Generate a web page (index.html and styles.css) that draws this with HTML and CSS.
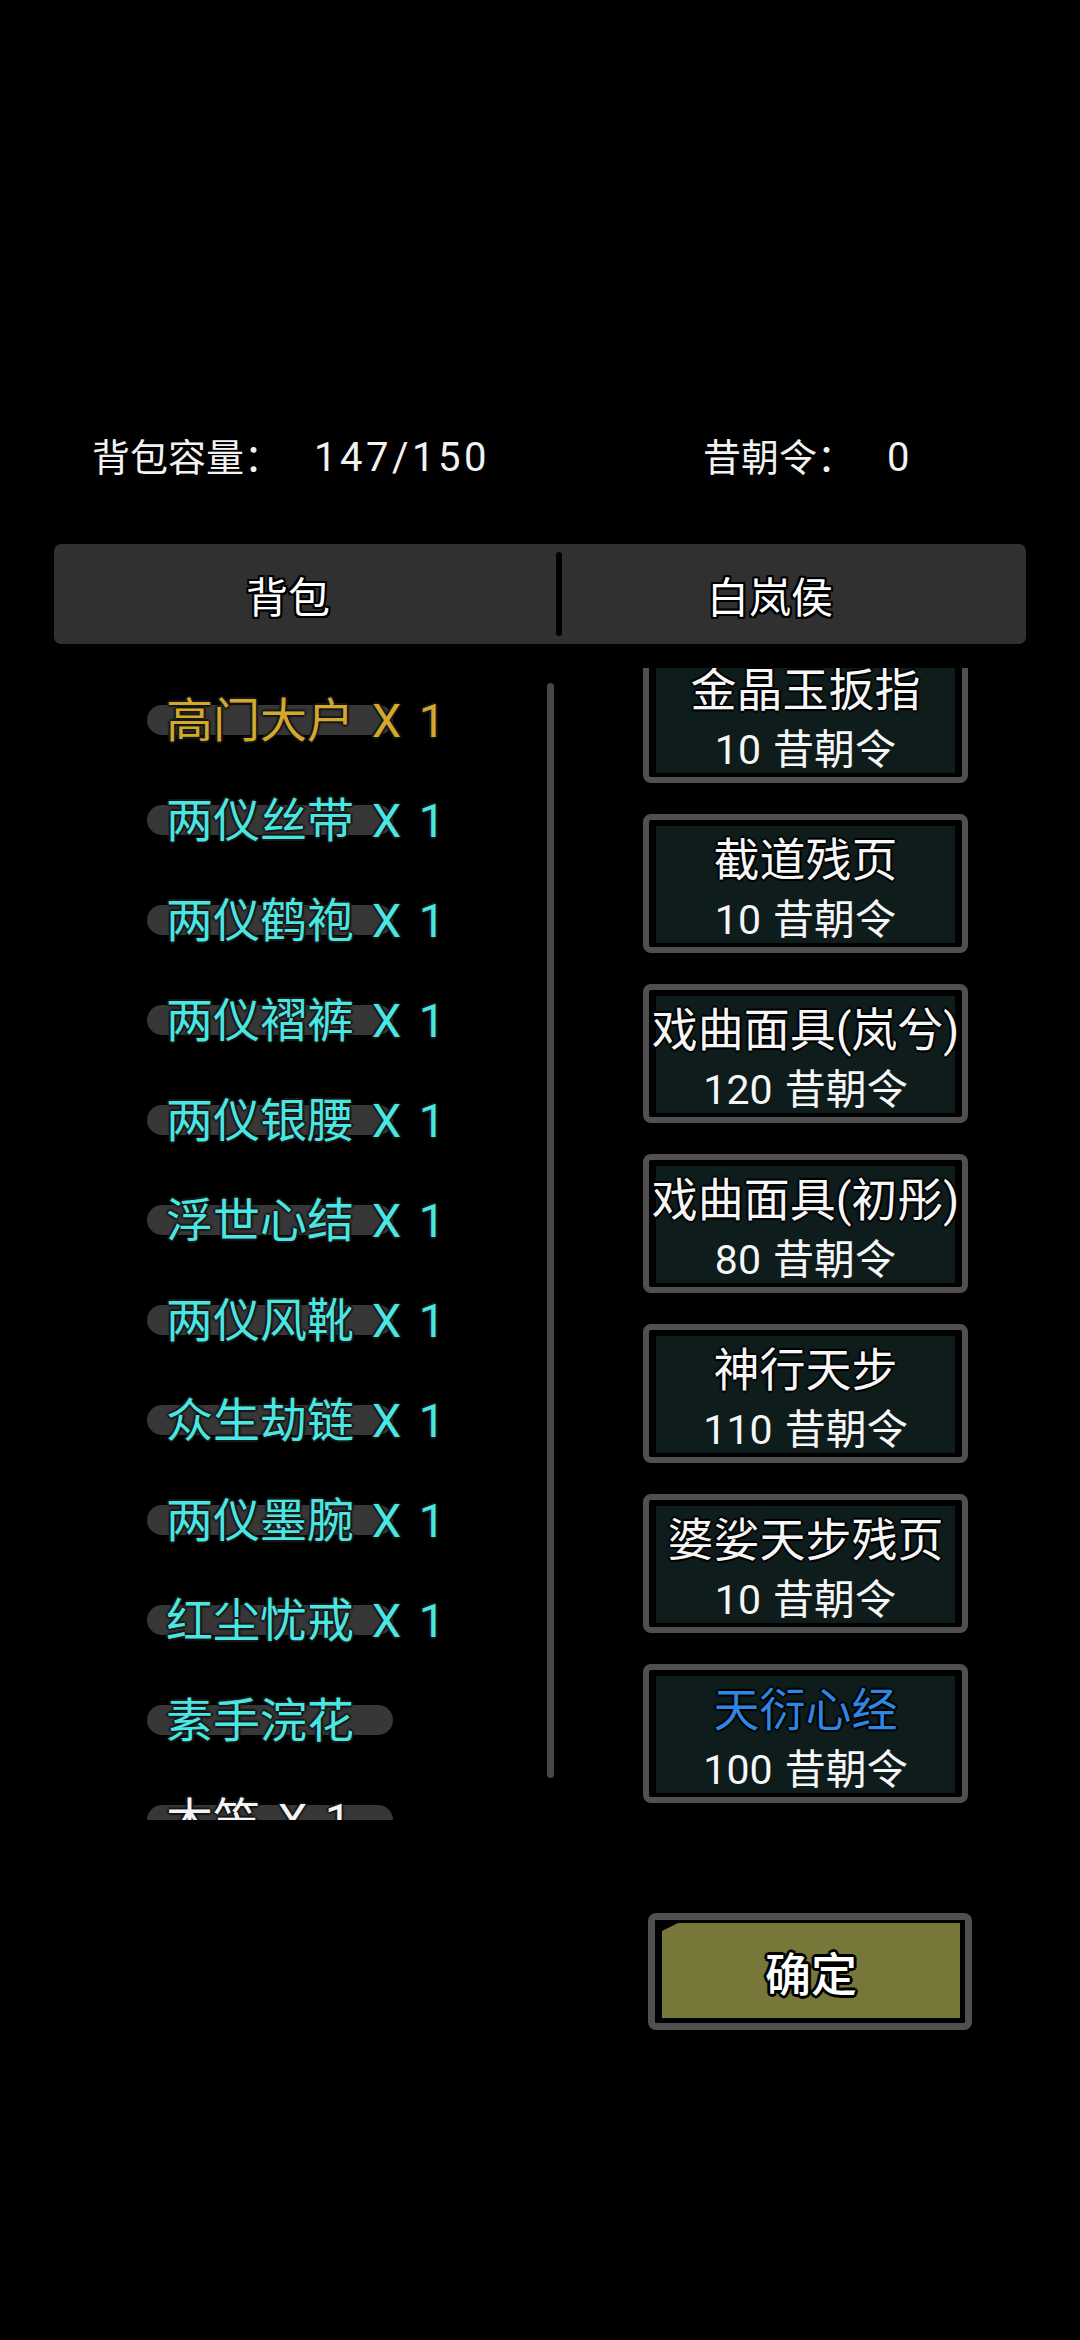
FILE: index.html
```html
<!DOCTYPE html>
<html lang="zh-CN">
<head>
<meta charset="utf-8">
<title>背包</title>
<link rel="stylesheet" href="styles.css">
</head>
<body>
<div class="screen">
  <div class="stats">
    <div class="stat stat-cap">背包容量：<span class="num">147/150</span></div>
    <div class="stat stat-coin">昔朝令：<span class="num">0</span></div>
  </div>

  <div class="tabs">
    <div class="tab tab-left">背包</div>
    <div class="tab-divider"></div>
    <div class="tab tab-right">白岚侯</div>
  </div>

  <div class="main">
    <div class="bag">
      <div class="bag-item"><span class="pill"></span><span class="label gold">高门大户 X 1</span></div>
      <div class="bag-item"><span class="pill"></span><span class="label cyan">两仪丝带 X 1</span></div>
      <div class="bag-item"><span class="pill"></span><span class="label cyan">两仪鹤袍 X 1</span></div>
      <div class="bag-item"><span class="pill"></span><span class="label cyan">两仪褶裤 X 1</span></div>
      <div class="bag-item"><span class="pill"></span><span class="label cyan">两仪银腰 X 1</span></div>
      <div class="bag-item"><span class="pill"></span><span class="label cyan">浮世心结 X 1</span></div>
      <div class="bag-item"><span class="pill"></span><span class="label cyan">两仪风靴 X 1</span></div>
      <div class="bag-item"><span class="pill"></span><span class="label cyan">众生劫链 X 1</span></div>
      <div class="bag-item"><span class="pill"></span><span class="label cyan">两仪墨腕 X 1</span></div>
      <div class="bag-item"><span class="pill"></span><span class="label cyan">红尘忧戒 X 1</span></div>
      <div class="bag-item"><span class="pill"></span><span class="label cyan">素手浣花</span></div>
      <div class="bag-item"><span class="pill"></span><span class="label white">木笠 X 1</span></div>
    </div>

    <div class="scrollbar"></div>

    <div class="shop">
      <div class="shop-track">
        <div class="card"><div class="card-fill"><div class="card-title">金晶玉扳指</div><div class="card-price">10 昔朝令</div></div></div>
        <div class="card"><div class="card-fill"><div class="card-title">截道残页</div><div class="card-price">10 昔朝令</div></div></div>
        <div class="card"><div class="card-fill"><div class="card-title">戏曲面具(岚兮)</div><div class="card-price">120 昔朝令</div></div></div>
        <div class="card"><div class="card-fill"><div class="card-title">戏曲面具(初彤)</div><div class="card-price">80 昔朝令</div></div></div>
        <div class="card"><div class="card-fill"><div class="card-title">神行天步</div><div class="card-price">110 昔朝令</div></div></div>
        <div class="card"><div class="card-fill"><div class="card-title">婆娑天步残页</div><div class="card-price">10 昔朝令</div></div></div>
        <div class="card"><div class="card-fill"><div class="card-title blue">天衍心经</div><div class="card-price">100 昔朝令</div></div></div>
      </div>
    </div>
  </div>

  <div class="actions">
    <div class="confirm"><div class="confirm-fill">确定</div></div>
  </div>
</div>
</body>
</html>
```

FILE: styles.css
```css
* { box-sizing: border-box; }

html, body {
  margin: 0;
  padding: 0;
  background: #000;
}

body {
  width: 1080px;
  height: 2340px;
  overflow: hidden;
  font-family: Roboto, "Noto Sans CJK SC", sans-serif;
  color: #fff;
}

.screen {
  width: 1080px;
  height: 2340px;
  padding-top: 428px;
}

/* header stats */
.stats {
  display: flex;
  height: 60px;
  align-items: center;
  font-size: 38px;
  line-height: 60px;
  color: #f2f2f2;
}

.stat-cap { margin-left: 92px; width: 611px; }

.num {
  margin-left: 32px;
  font-size: 40px;
  letter-spacing: 3.5px;
}

/* tabs */
.tabs {
  margin: 56px 54px 0 54px;
  height: 100px;
  background: #303030;
  border-radius: 7px;
  display: flex;
  align-items: center;
}

.tab {
  height: 100%;
  display: flex;
  align-items: center;
  justify-content: center;
  font-size: 42px;
  color: #fff;
  text-shadow: 0 0 2px #000, 2px 0 0 #000, -2px 0 0 #000, 0 2px 0 #000, 0 -2px 0 #000,
    2px 2px 0 #000, -2px -2px 0 #000, 2px -2px 0 #000, -2px 2px 0 #000;
}

.tab-left { flex: 0 0 502px; padding-right: 34px; }
.tab-right { flex: 1; padding-right: 48px; }

.tab-divider {
  width: 6px;
  height: 84px;
  background: #000;
  border-radius: 3px;
}

/* main area */
.main {
  margin-top: 24px;
  height: 1152px;
  display: flex;
}

.bag {
  width: 547px;
  height: 1152px;
  overflow: hidden;
  padding-top: 2px;
}

.bag-item {
  height: 100px;
  display: grid;
  grid-template-areas: "cell";
  align-items: center;
}

.pill {
  grid-area: cell;
  margin-left: 147px;
  width: 246px;
  height: 30px;
  border-radius: 15px;
  background: #373737;
}

.label {
  grid-area: cell;
  margin-left: 166px;
  font-size: 47px;
  line-height: 1;
  white-space: nowrap;
  word-spacing: 6px;
  text-shadow: 0 0 3px #111, 2px 0 1px #1a1a1a, -2px 0 1px #1a1a1a, 0 2px 1px #1a1a1a, 0 -2px 1px #1a1a1a;
}

.gold { color: #d2a92c; }
.cyan { color: #4ae6e2; }
.white { color: #f4f4f4; }

.scrollbar {
  width: 7px;
  margin-top: 15px;
  height: 1095px;
  background: #474747;
  border-radius: 4px;
}

.shop {
  margin-left: 89px;
  width: 325px;
  height: 1152px;
  overflow: hidden;
}

.shop-track {
  margin-top: -24px;
  display: flex;
  flex-direction: column;
  gap: 31px;
}

.card {
  width: 325px;
  height: 139px;
  border: 6px solid #505050;
  border-radius: 8px;
  background: #000;
  padding: 6px 7px 4px 7px;
}

.card-fill {
  height: 117px;
  background: #0e1c1c;
  padding-top: 4px;
  display: flex;
  flex-direction: column;
  align-items: center;
}

.card-title {
  height: 60px;
  line-height: 60px;
  font-size: 46px;
  white-space: nowrap;
  color: #f6f6f6;
  text-shadow: 0 0 2px #000, 2px 0 1px #000, -2px 0 1px #000, 0 2px 1px #000, 0 -2px 1px #000;
}

.card-title.blue { color: #2f86e0; }

.card-price {
  height: 60px;
  line-height: 60px;
  font-size: 41px;
  white-space: nowrap;
  word-spacing: 2px;
  color: #f6f6f6;
}

/* confirm */
.actions {
  margin-top: 93px;
  padding-left: 648px;
}

.confirm {
  width: 324px;
  height: 117px;
  border: 7px solid #505050;
  border-radius: 8px;
  background: #000;
  padding: 3px 5px 5px 7px;
}

.confirm-fill {
  height: 95px;
  background: #777739;
  clip-path: polygon(16px 0, 100% 0, 100% 100%, 0 100%, 0 8px);
  display: flex;
  align-items: center;
  justify-content: center;
  font-size: 46px;
  font-weight: 500;
  color: #fff;
  text-shadow: 0 0 3px #000, 3px 0 0 #000, -3px 0 0 #000, 0 3px 0 #000, 0 -3px 0 #000,
    2px 2px 0 #000, -2px -2px 0 #000, 2px -2px 0 #000, -2px 2px 0 #000;
}
```
